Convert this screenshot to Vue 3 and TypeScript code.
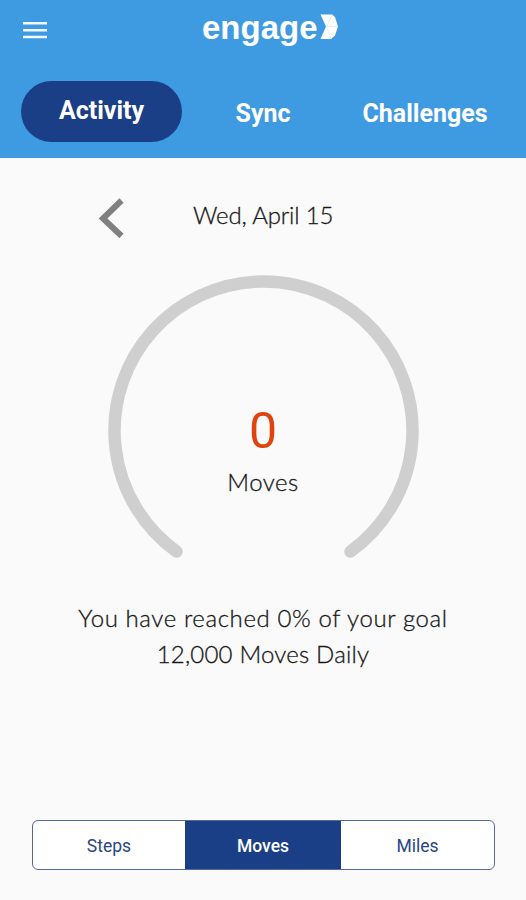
<script setup lang="ts">
import { ref } from 'vue'

const tabs = ['Activity', 'Sync', 'Challenges']
const units = ['Steps', 'Moves', 'Miles']
const activeTab = ref('Activity')
const activeUnit = ref('Moves')
const moves = ref(0)
</script>

<template>
  <main class="screen">
    <header class="header">
      <div class="topbar">
        <button class="menu" aria-label="Menu">
          <svg width="24" height="17" viewBox="0 0 24 17">
            <path d="M0 1.300H24M0 8.200H24M0 15H24" stroke="#f4faff" stroke-width="2.600" />
          </svg>
        </button>
        <div class="brand">
          <span class="brand-name">engage</span>
          <svg class="brand-mark" width="19" height="26" viewBox="0 0 19 26">
            <path d="M.5 .5H12L15 3L18 12.500L15 21.500L11 25H.5L6 12.500Z" fill="#fff" />
            <path d="M12 .5L6.500 12.500L11 25M6.500 12.500H18" fill="none" stroke="#d4e9f9" stroke-width=".7" />
          </svg>
        </div>
      </div>
      <nav class="tabs">
        <button v-for="tab in tabs" :key="tab" class="tab" :class="{ active: tab === activeTab }" @click="activeTab = tab">
          <span>{{ tab }}</span>
        </button>
      </nav>
    </header>

    <section class="date-row">
      <button class="previous" aria-label="Previous day">
        <svg width="26" height="40" viewBox="0 0 26 40">
          <path d="M23.500 2.500L5 20.500L23.500 38" fill="none" stroke="#808080" stroke-width="6" />
        </svg>
      </button>
      <span class="date">Wed, April 15</span>
    </section>

    <section class="gauge">
      <svg class="arc" width="312" height="290" viewBox="0 0 312 290">
        <path d="M69.500 276.500A149 149 0 1 1 243.500 276.500" fill="none" stroke="#d0cfd0" stroke-width="12.500" stroke-linecap="round" />
      </svg>
      <div class="reading">
        <span class="value">{{ moves }}</span>
        <span class="label">Moves</span>
      </div>
    </section>

    <section class="goal">
      <p class="reached">You have reached 0% of your goal</p>
      <p class="target">12,000 Moves Daily</p>
    </section>

    <div class="units">
      <button v-for="unit in units" :key="unit" class="unit" :class="{ selected: unit === activeUnit }" @click="activeUnit = unit">
        {{ unit }}
      </button>
    </div>
  </main>
</template>

<style>
body {
  margin: 0;
  background: #fafafa;
}
</style>

<style scoped>
.screen {
  display: flex;
  flex-direction: column;
  width: 526px;
  height: 900px;
  overflow: hidden;
  background: #fafafa;
  color: #181818;
  font-family: Lato, "Liberation Sans", sans-serif;
  font-weight: 300;
}
button {
  padding: 0;
  border: 0;
  background: none;
  color: inherit;
  font: inherit;
}
svg {
  display: block;
}
.header {
  height: 158px;
  background: #3f9be1;
  color: #fff;
}
.topbar {
  display: flex;
  height: 81px;
}
.menu {
  width: 24px;
  height: 17px;
  margin: 22px 0 0 23px;
}
.brand {
  display: flex;
  margin: 9px 0 0 155px;
}
.brand-name {
  width: 118px;
  font: bold 33px/38px "Liberation Sans", sans-serif;
}
.brand-mark {
  margin-top: 5px;
}
.tabs {
  display: grid;
  grid-template-columns: 161px 162px 162px;
  height: 61px;
  margin-left: 21px;
  font: bold 25px/60px Roboto, sans-serif;
}
.tab {
  height: 61px;
  padding-top: 3px;
  white-space: nowrap;
}
.tab.active {
  padding: 0 0 1px;
  border-radius: 31px;
  background: #1b3f86;
}
.date-row {
  display: flex;
  height: 117px;
}
.previous {
  width: 26px;
  height: 40px;
  margin: 40px 0 0 98px;
}
.date,
.label,
.goal {
  font-size: 24px;
  -webkit-text-stroke: .3px currentColor;
}
.date {
  margin: 42px 0 0 69px;
  line-height: 30px;
  letter-spacing: -.15px;
  white-space: nowrap;
}
.gauge {
  display: grid;
  width: 312px;
  height: 290px;
  margin-left: 107px;
}
.arc,
.reading {
  grid-area: 1 / 1;
}
.reading {
  display: flex;
  flex-direction: column;
  align-items: center;
  padding-top: 126px;
}
.value {
  color: #df430e;
  font: 400 50px/60px Roboto, sans-serif;
}
.label {
  margin-top: 6px;
  line-height: 30px;
  letter-spacing: .5px;
}
.goal {
  padding-top: 35px;
  line-height: 36px;
  text-align: center;
}
.goal p {
  margin: 0;
}
.reached {
  letter-spacing: .6px;
}
.target {
  letter-spacing: .2px;
}
.units {
  display: grid;
  grid-template-columns: 152px 156px 1fr;
  width: 463px;
  height: 50px;
  box-sizing: border-box;
  margin: auto 0 30px 32px;
  border: 1px solid #5668a0;
  border-radius: 6px;
  overflow: hidden;
  background: #fff;
  color: #294586;
  font: 17.500px/50px Roboto, sans-serif;
}
.unit.selected {
  background: #1b3f86;
  color: #fff;
  font-weight: 500;
}
</style>
